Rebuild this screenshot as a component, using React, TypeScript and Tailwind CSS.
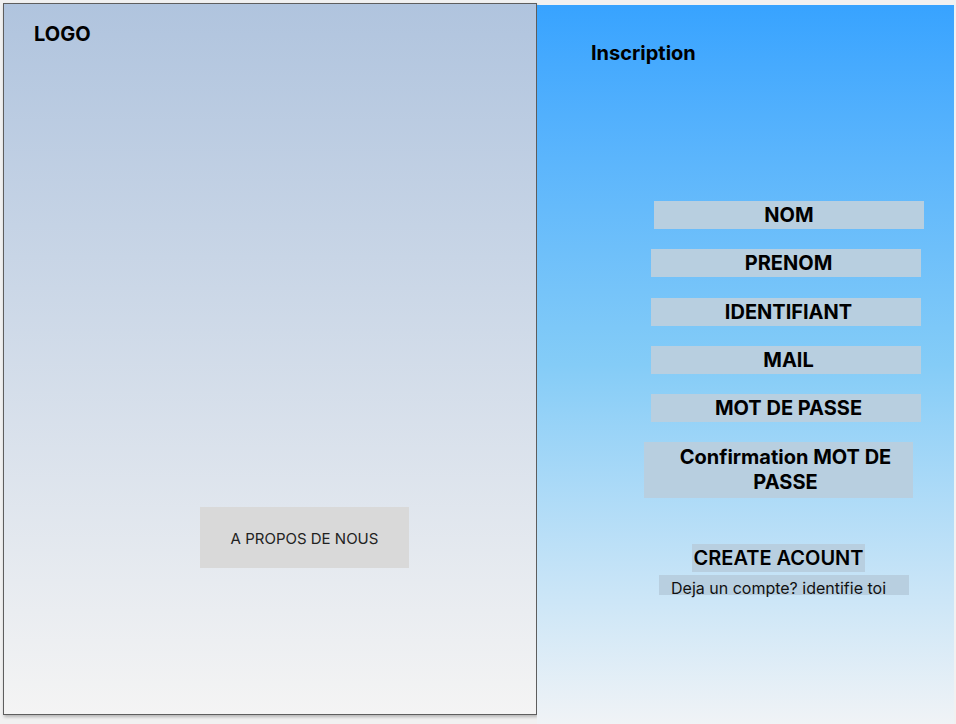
export default function App() {
  const fields = [
    { label: "NOM", cls: "ml-[117px] mt-[136px] h-[28px]" },
    { label: "PRENOM", cls: "ml-[114px] mt-[20px] h-[28px] pl-[5px]" },
    { label: "IDENTIFIANT", cls: "ml-[114px] mt-[21px] h-[28px] pl-[5px]" },
    { label: "MAIL", cls: "ml-[114px] mt-[20px] h-[28px] pl-[5px]" },
    { label: "MOT DE PASSE", cls: "ml-[114px] mt-[20px] h-[28px] pl-[5px]" },
  ];

  return (
    <div
      className="flex h-[724px] w-[956px] overflow-hidden bg-[#f1f1f1]"
      style={{ fontFamily: "Inter, 'Liberation Sans', sans-serif" }}
    >
      <div className="mt-[3px] ml-[3px] flex h-[712px] w-[534px] shrink-0 flex-col border border-[#5e5e5e] bg-gradient-to-b from-[#b0c4de] to-[#f4f4f4] shadow-[1px_2px_3px_rgba(0,0,0,0.25)]">
        <div className="mt-[18px] ml-[30px] text-[20px] leading-[24px] font-bold text-black">
          LOGO
        </div>
        <div className="mt-[461px] ml-[196px] flex h-[61px] w-[209px] items-center justify-center bg-[#d9d9d9] pt-[3px] text-[15px] text-[#222]">
          A PROPOS DE NOUS
        </div>
      </div>

      <div className="mt-[5px] flex h-[719px] w-[417px] shrink-0 flex-col bg-gradient-to-b from-[#37a3ff] via-[#84ccf7] to-[#f0f3f6]">
        <div className="mt-[36px] ml-[54px] text-[20px] leading-[24px] font-bold text-black">
          Inscription
        </div>

        {fields.map((f) => (
          <div
            key={f.label}
            className={`${f.cls} flex w-[270px] items-center justify-center bg-[#b8cfe0] text-[20px] font-bold text-black`}
          >
            {f.label}
          </div>
        ))}

        <div className="mt-[20px] ml-[107px] flex h-[56px] w-[269px] items-center justify-center bg-[#b8cfe0] pr-[2px] pl-[16px] text-center text-[20px] leading-[25px] font-bold text-black">
          Confirmation MOT DE PASSE
        </div>

        <div className="mt-[46px] ml-[155px] flex h-[28px] w-[173px] items-center justify-center bg-[#b8cfe0] text-[20px] font-semibold whitespace-nowrap text-black">
          CREATE ACOUNT
        </div>
        <div className="mt-[3px] ml-[122px] h-[20px] w-[250px] bg-[#b8cfe0] pl-[12px] text-[16px] leading-[26px] text-[#111]">
          Deja un compte? identifie toi
        </div>
      </div>
    </div>
  );
}
